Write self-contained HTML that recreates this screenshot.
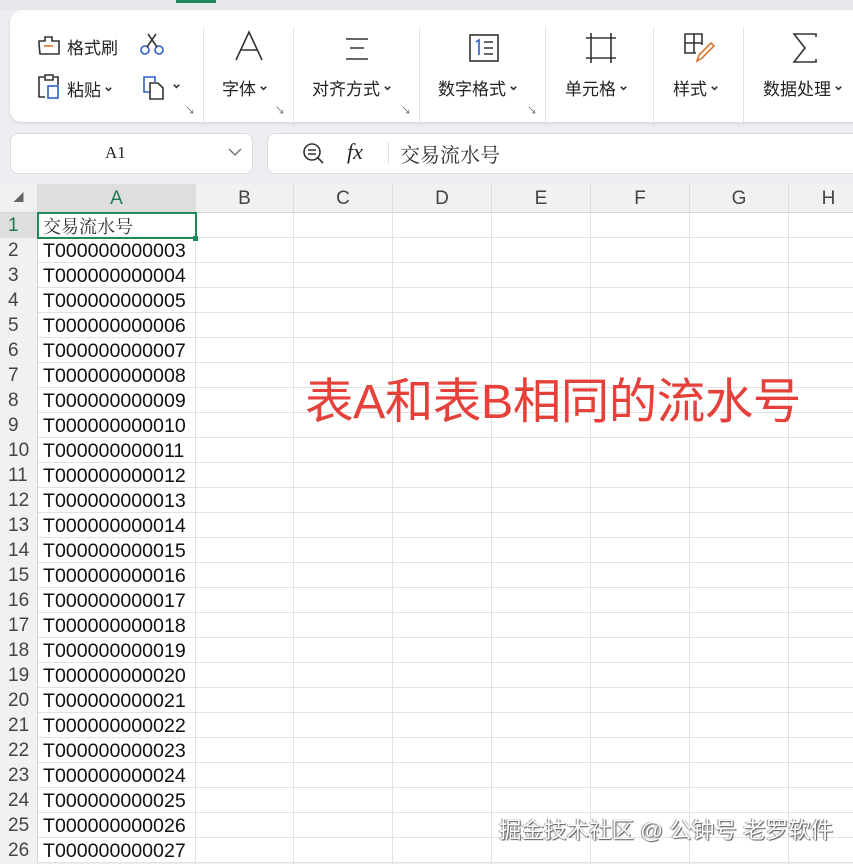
<!DOCTYPE html>
<html><head><meta charset="utf-8"><style>
*{margin:0;padding:0;box-sizing:border-box}
body{width:853px;height:863px;overflow:hidden;background:#eceef1;font-family:"Liberation Sans","Noto Sans CJK SC",sans-serif;position:relative;color:#222}
.abs{position:absolute}
.rib{left:10px;top:10px;width:860px;height:112px;background:#fff;border-radius:12px;box-shadow:0 1px 3px rgba(0,0,0,.12)}
.sep{position:absolute;top:17px;width:1px;height:99px;background:#e3e3e3}
.lbl{position:absolute;top:65px;font-size:17px;color:#222;white-space:nowrap}
.car{display:inline-block;width:9px;height:9px;margin-left:3px;vertical-align:2px}
.corner{position:absolute;font-size:10px;color:#666;top:92px}
.box{background:#fff;border:1px solid #dcdcdc;border-radius:8px}
.grid{left:0;top:184px;width:853px;height:679px;background:#fff}
.ch{position:absolute;top:184px;height:29px;background:#f1f1f1;border-right:1px solid #ddd;border-bottom:1px solid #d6d6d6;text-align:center;font-size:19px;line-height:30px;color:#444}
.vl{position:absolute;top:213px;width:1px;height:651px;background:#e2e2e2}
.hl{position:absolute;left:0;width:853px;height:1px;background:#e2e2e2}
.rh{position:absolute;left:0;width:38px;height:25px;background:#f1f1f1;border-right:1px solid #d6d6d6;font-size:19px;line-height:26px;padding-left:8px;color:#444}
.cell{position:absolute;left:43px;font-size:19.6px;line-height:26px;color:#111;white-space:nowrap}
</style></head><body>
<svg width="0" height="0" style="position:absolute"><defs><symbol id="cv" viewBox="0 0 10 10"><path d="M2 3l3 3 3-3" fill="none" stroke="#333" stroke-width="1.8"/></symbol></defs></svg>
<div class="abs" style="left:0;top:0;width:853px;height:10px;background:#e6e8eb"></div>
<div class="abs" style="left:176px;top:0;width:40px;height:3px;background:#1e8a5a"></div>
<div class="abs rib">
  <svg class="abs" style="left:26px;top:23px" width="26" height="24" viewBox="0 0 26 24" fill="none" stroke="#333" stroke-width="1.6"><path d="M9 4h7v4h7v13H4L3 11V8h6z"/><path d="M8 13h9" stroke="#d8742c"/></svg>
  <div class="abs" style="left:57px;top:24px;font-size:17px">格式刷</div>
  <svg class="abs" style="left:129px;top:22px" width="26" height="24" viewBox="0 0 26 24" fill="none" stroke="#2b5fc7" stroke-width="1.6"><circle cx="6" cy="18" r="4"/><circle cx="20" cy="18" r="4"/><path d="M8 15L17 2M18 15L9 2" stroke="#333"/></svg>
  <svg class="abs" style="left:26px;top:63px" width="26" height="28" viewBox="0 0 26 28" fill="none" stroke="#333" stroke-width="1.6"><path d="M8 4H3v20h6M18 4h4v8"/><path d="M9 2h8v5H9z"/><rect x="12" y="13" width="10" height="12" stroke="#2b5fc7"/></svg>
  <div class="abs" style="left:57px;top:66px;font-size:17px">粘贴<svg class="car"><use href="#cv"/></svg></div>
  <svg class="abs" style="left:131px;top:64px" width="28" height="28" viewBox="0 0 28 28" fill="none" stroke="#333" stroke-width="1.6"><path d="M9 18H3V3h11v5" stroke="#2b5fc7"/><path d="M9 9h8l5 5v11H9z"/></svg>
  <svg class="abs" style="left:162px;top:72px" width="9" height="9"><use href="#cv"/></svg>
  <div class="corner" style="left:175px">&#8600;</div>
  <div class="sep" style="left:193px"></div>
  <svg class="abs" style="left:224px;top:20px" width="30" height="32" viewBox="0 0 30 32" fill="none" stroke="#333" stroke-width="1.6"><path d="M2 30L15 2l13 28M7 20h16"/></svg>
  <div class="lbl" style="left:212px">字体<svg class="car"><use href="#cv"/></svg></div>
  <div class="corner" style="left:265px">&#8600;</div>
  <div class="sep" style="left:283px"></div>
  <svg class="abs" style="left:334px;top:26px" width="26" height="26" viewBox="0 0 26 26" fill="none" stroke="#333" stroke-width="1.6"><path d="M2 3h22M6 12h14M2 23h22"/></svg>
  <div class="lbl" style="left:302px">对齐方式<svg class="car"><use href="#cv"/></svg></div>
  <div class="corner" style="left:391px">&#8600;</div>
  <div class="sep" style="left:409px"></div>
  <svg class="abs" style="left:458px;top:23px" width="32" height="30" viewBox="0 0 32 30" fill="none" stroke="#333" stroke-width="1.6"><rect x="2" y="2" width="28" height="26"/><path d="M8 9l3-2v15" stroke="#2b5fc7"/><path d="M16 9h9M16 15h9M16 21h9"/></svg>
  <div class="lbl" style="left:428px">数字格式<svg class="car"><use href="#cv"/></svg></div>
  <div class="corner" style="left:517px">&#8600;</div>
  <div class="sep" style="left:535px"></div>
  <svg class="abs" style="left:575px;top:22px" width="32" height="32" viewBox="0 0 32 32" fill="none" stroke="#333" stroke-width="1.6"><path d="M6 1v30M26 1v30M1 6h30M1 26h30"/></svg>
  <div class="lbl" style="left:555px">单元格<svg class="car"><use href="#cv"/></svg></div>
  <div class="sep" style="left:643px"></div>
  <svg class="abs" style="left:673px;top:22px" width="32" height="32" viewBox="0 0 32 32" fill="none" stroke="#333" stroke-width="1.6"><path d="M19 13V2H2v19h11M2 11h17M11 2v19"/><path d="M14 29l2-6 12-12 3 3-12 12z" stroke="#d8742c"/></svg>
  <div class="lbl" style="left:663px">样式<svg class="car"><use href="#cv"/></svg></div>
  <div class="sep" style="left:733px"></div>
  <svg class="abs" style="left:782px;top:22px" width="26" height="32" viewBox="0 0 26 32" fill="none" stroke="#333" stroke-width="1.6"><path d="M24 5V2H2l11 14L2 30h22v-3"/></svg>
  <div class="lbl" style="left:753px">数据处理<svg class="car"><use href="#cv"/></svg></div>
</div>
<div class="abs box" style="left:10px;top:133px;width:243px;height:41px"></div>
<div class="abs" style="left:105px;top:143px;font-family:'Liberation Serif',serif;font-size:17px">A1</div>
<svg class="abs" style="left:227px;top:147px" width="16" height="10" viewBox="0 0 16 10" fill="none" stroke="#777" stroke-width="1.5"><path d="M2 2l6 6 6-6"/></svg>
<div class="abs box" style="left:267px;top:133px;width:600px;height:41px"></div>
<svg class="abs" style="left:301px;top:141px" width="26" height="26" viewBox="0 0 26 26" fill="none" stroke="#333" stroke-width="1.6"><circle cx="11" cy="11" r="8"/><path d="M7 9h8M7 13h8M17 17l5 5"/></svg>
<div class="abs" style="left:347px;top:139px;font-family:'Liberation Serif',serif;font-style:italic;font-size:22px">fx</div>
<div class="abs" style="left:388px;top:142px;width:1px;height:22px;background:#ddd"></div>
<div class="abs" style="left:400px;top:139px;font-family:'Noto Serif CJK SC',serif;font-size:20px;color:#333">交易流水号</div>

<div class="abs grid"></div>
<div class="ch" style="left:0;width:38px;font-size:10px;color:#666">&#9698;</div>
<div class="ch" style="left:38px;width:158px;background:#dedede;color:#1e7a50">A</div>
<div class="ch" style="left:196px;width:98px">B</div>
<div class="ch" style="left:294px;width:99px">C</div>
<div class="ch" style="left:393px;width:99px">D</div>
<div class="ch" style="left:492px;width:99px">E</div>
<div class="ch" style="left:591px;width:99px">F</div>
<div class="ch" style="left:690px;width:99px">G</div>
<div class="ch" style="left:789px;width:80px">H</div>
<div class="vl" style="left:195px"></div><div class="vl" style="left:293px"></div><div class="vl" style="left:392px"></div><div class="vl" style="left:491px"></div><div class="vl" style="left:590px"></div><div class="vl" style="left:689px"></div><div class="vl" style="left:788px"></div>
<div id="rows"></div>
<script>
var h='';for(var i=1;i<=26;i++){var y=213+(i-1)*25;
h+='<div class="hl" style="top:'+(y+24)+'px"></div>';
h+='<div class="rh" style="top:'+y+'px'+(i==1?';background:#dedede;color:#1e7a50':'')+'">'+i+'</div>';
if(i==1)h+='<div class="cell" style="top:'+y+'px;font-family:\'Noto Serif CJK SC\',serif;font-size:18px;color:#333">交易流水号</div>';
else{var n=String(i+1);while(n.length<12)n='0'+n;h+='<div class="cell" style="top:'+y+'px">T'+n+'</div>';}}
document.getElementById('rows').innerHTML=h;
</script>
<div class="abs" style="left:37px;top:212px;width:160px;height:27px;border:2px solid #1e8a5a"></div>
<div class="abs" style="left:193px;top:236px;width:5px;height:5px;background:#1e8a5a"></div>
<div class="abs" style="left:305px;top:362px;font-size:48.5px;color:#e5403a;white-space:nowrap;letter-spacing:-0.5px">表A和表B相同的流水号</div>
<div class="abs" style="left:499px;top:813px;font-size:22.5px;color:#fff;white-space:nowrap;text-shadow:1px 1px 1px #555,-1px 0 1px #888">掘金技术社区 @ 公钟号 老罗软件</div>
</body></html>
